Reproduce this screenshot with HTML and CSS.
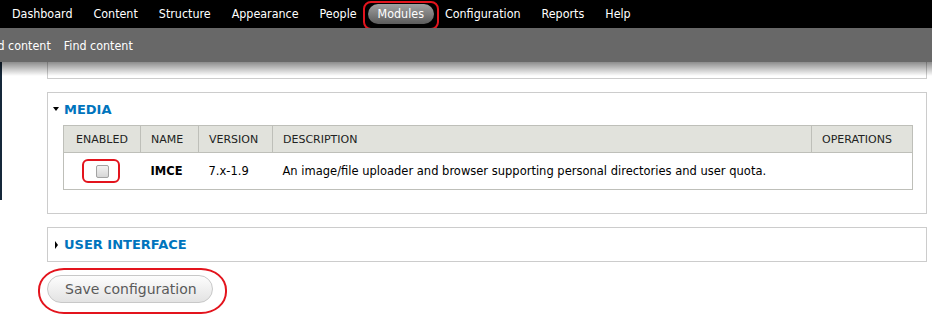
FILE: index.html
```html
<!DOCTYPE html>
<html>
<head>
<meta charset="utf-8">
<link rel="stylesheet" href="styles.css">
</head>
<body>
<div class="toolbar">
  <ul class="menu">
    <li><a>Dashboard</a></li>
    <li><a>Content</a></li>
    <li><a>Structure</a></li>
    <li><a>Appearance</a></li>
    <li><a>People</a></li>
    <li class="marked"><a class="active">Modules</a><span class="mark mark-modules"></span></li>
    <li><a>Configuration</a></li>
    <li><a>Reports</a></li>
    <li><a>Help</a></li>
  </ul>
</div>
<div class="shortcuts">
  <a class="cut">Add content</a>
  <a>Find content</a>
</div>
<div class="page">
  <div class="fs fs-prev"></div>
  <div class="fs fs-media">
    <div class="legend"><span class="tri-down"></span>Media</div>
    <table class="modules">
      <colgroup>
        <col class="c-enabled">
        <col class="c-name">
        <col class="c-version">
        <col class="c-desc">
        <col class="c-ops">
      </colgroup>
      <thead>
        <tr>
          <th class="h-enabled">Enabled</th>
          <th>Name</th>
          <th>Version</th>
          <th>Description</th>
          <th>Operations</th>
        </tr>
      </thead>
      <tbody>
        <tr>
          <td class="d-enabled"><span class="cbwrap"><span class="checkbox"></span><span class="mark mark-check"></span></span></td>
          <td class="name">IMCE</td>
          <td>7.x-1.9</td>
          <td>An image/file uploader and browser supporting personal directories and user quota.</td>
          <td></td>
        </tr>
      </tbody>
    </table>
  </div>
  <div class="fs fs-ui">
    <div class="legend"><span class="tri-right"></span>User interface</div>
  </div>
  <div class="actions">
    <span class="btnwrap"><button class="btn">Save configuration</button><span class="mark mark-btn"></span></span>
  </div>
</div>
</body>
</html>
```

FILE: styles.css
```css
body {
  margin: 0;
  background: #fff;
  font-family: "DejaVu Sans", Verdana, sans-serif;
}

.toolbar {
  background: #000;
  height: 28px;
}

.menu {
  list-style: none;
  margin: 0;
  padding: 0 0 0 2px;
  display: flex;
  align-items: center;
  height: 28px;
  gap: 1px;
}

.menu li {
  display: block;
}

.menu a,
.shortcuts a {
  font-family: "DejaVu Sans Condensed", "DejaVu Sans", sans-serif;
  font-size: 12.4px;
  color: #fff;
}

.menu a {
  display: block;
  padding: 0 10px;
  line-height: 20px;
  border-radius: 10px;
}

.menu a.active {
  background: linear-gradient(#a0a0a0, #5c5c5c);
}

.marked {
  position: relative;
}

.mark {
  position: absolute;
  border: 2px solid #e3141d;
  pointer-events: none;
}

.mark-modules {
  left: -5px;
  right: -5px;
  top: -3px;
  bottom: -6px;
  border-radius: 8px;
}

.shortcuts {
  position: relative;
  z-index: 2;
  background: #686868;
  height: 34px;
  display: flex;
  align-items: center;
  gap: 13px;
}

.shortcuts .cut {
  margin-left: -17px;
}

.shortcuts::after {
  content: "";
  position: absolute;
  left: 0;
  right: 0;
  top: 100%;
  height: 14px;
  background: linear-gradient(rgba(0, 0, 0, 0.45), rgba(0, 0, 0, 0));
}

.page {
  padding: 0 5px 20px 47px;
  background: linear-gradient(#15283a, #15283a) no-repeat 0 0 / 2px 138px;
}

.fs {
  border: 1px solid #ccc;
}

.fs-prev {
  border-top: 0;
  height: 16px;
}

.fs-media {
  margin-top: 13px;
  padding: 0 13px 23px 15px;
}

.legend {
  display: flex;
  align-items: center;
  height: 32px;
  margin-left: -10px;
  color: #0074bd;
  font-weight: bold;
  font-size: 13px;
  text-transform: uppercase;
}

.tri-down {
  width: 0;
  height: 0;
  border-left: 3px solid transparent;
  border-right: 3px solid transparent;
  border-top: 4px solid #000;
  margin-right: 5px;
}

.tri-right {
  width: 0;
  height: 0;
  border-top: 4px solid transparent;
  border-bottom: 4px solid transparent;
  border-left: 3px solid #000;
  margin-left: 2px;
  margin-right: 6px;
}

.modules {
  width: 849px;
  border-collapse: collapse;
  table-layout: fixed;
  font-size: 11.5px;
  color: #000;
}

.c-enabled { width: 77px; }
.c-name { width: 58px; }
.c-version { width: 74px; }
.c-desc { width: 539px; }
.c-ops { width: 101px; }

.modules th {
  background: #e1e2dc;
  border: 1px solid #bebfb9;
  height: 26px;
  padding: 0 10px;
  font-size: 11px;
  font-weight: normal;
  text-transform: uppercase;
  text-align: left;
  color: #222;
  white-space: nowrap;
}

.modules th.h-enabled {
  padding: 0;
  text-align: center;
}

.modules td {
  border-bottom: 1px solid #bebfb9;
  height: 36px;
  padding: 0 10px;
  white-space: nowrap;
}

.modules tr td:first-child {
  border-left: 1px solid #bebfb9;
}

.modules tr td:last-child {
  border-right: 1px solid #bebfb9;
}

.modules td.d-enabled {
  padding: 0;
  text-align: center;
}

.modules td.name {
  font-weight: bold;
}

.cbwrap {
  position: relative;
  display: inline-block;
  vertical-align: middle;
}

.checkbox {
  display: block;
  width: 11px;
  height: 11px;
  border: 1px solid #a3a3a3;
  border-radius: 2px;
  background: linear-gradient(#f2f2f2, #d6d6d6);
}

.mark-check {
  left: -14px;
  right: -11px;
  top: -6px;
  bottom: -5px;
  border-radius: 6px;
  border-width: 2px;
}

.fs-ui {
  margin-top: 13px;
  height: 33px;
  padding: 0 15px;
}

.fs-ui .legend {
  height: 33px;
}

.actions {
  margin-top: 13px;
}

.btnwrap {
  position: relative;
  display: inline-block;
}

.btn {
  display: block;
  width: 166px;
  height: 28px;
  padding: 0 0 0 17px;
  text-align: left;
  border: 1px solid #c8c8c8;
  border-radius: 14px;
  background: linear-gradient(#fdfdfd, #e3e3e3);
  color: #5a5a5a;
  font-family: "DejaVu Sans", Verdana, sans-serif;
  font-size: 14px;
}

.mark-btn {
  left: -9px;
  right: -14px;
  top: -7px;
  bottom: -11px;
  border-radius: 26px / 22px;
  border-width: 2px;
}
```
